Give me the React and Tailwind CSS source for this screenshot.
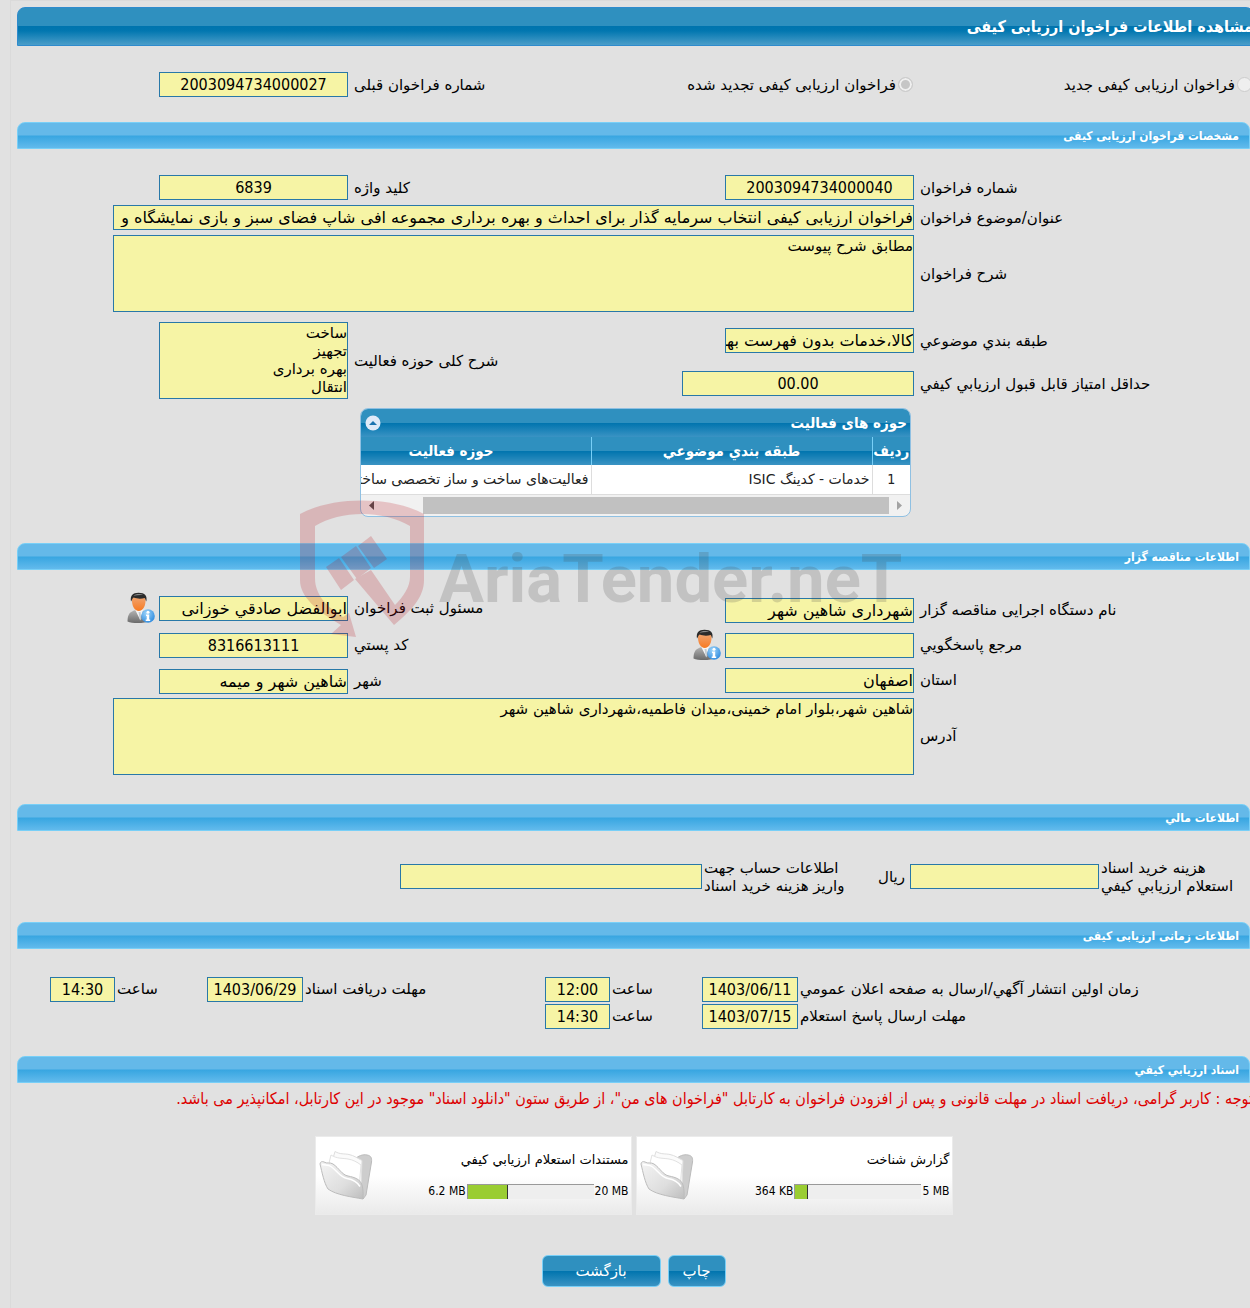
import { useId } from "react";

const inputBase =
  "block border border-[#2878a8] bg-[#f6f4a5] p-0 text-black outline-none";

function TitleBar({ children }) {
  return (
    <h1 className="-mr-1 h-[39px] rounded-t-lg border border-[#2e8bcd] bg-[linear-gradient(#2f90bf_0%,#2f90bf_50%,#0074ae_50%,#0277b0_62%,#4a9dc9_100%)] font-['DejaVu_Sans_Condensed','DejaVu_Sans',sans-serif] text-base leading-[37px] font-bold text-white">
      {children}
    </h1>
  );
}

function SectionBar({ children }) {
  return (
    <h2 className="h-[27px] rounded-t-lg border border-[#78cff7] bg-[linear-gradient(#64b9e9_0%,#64b9e9_48%,#38a6e1_52%,#62baec_100%)] pr-[10px] font-['DejaVu_Sans_Condensed','DejaVu_Sans',sans-serif] text-xs leading-[26px] font-bold text-white">
      {children}
    </h2>
  );
}

function TextInput({ id, value = "", size = "w-[189px]", center }) {
  return (
    <input
      id={id}
      type="text"
      readOnly
      value={value}
      className={`${inputBase} ${size} h-[25px] shrink-0 text-base leading-[18px] ${
        center
          ? "text-center font-['DejaVu_Sans_Condensed','DejaVu_Sans',sans-serif]"
          : "text-right"
      }`}
    />
  );
}

function TextBox({ id, value, size }) {
  return (
    <textarea
      id={id}
      readOnly
      value={value}
      className={`${inputBase} ${size} h-[77px] shrink-0 resize-none overflow-hidden pt-px text-[15px] leading-[18px]`}
    />
  );
}

// label + control, the label text sits against the control
function Field({ label, value, size, center, area, children }) {
  const id = useId();
  return (
    <div className="flex items-center">
      <label htmlFor={id} className="w-[330px] shrink-0 text-left">
        {label}
      </label>
      <div className="mr-[6px] flex items-center gap-1">
        {area ? (
          <TextBox id={id} value={value} size={size} />
        ) : (
          <TextInput id={id} value={value} size={size} center={center} />
        )}
        {children}
      </div>
    </div>
  );
}

function UserInfoIcon() {
  return (
    <svg viewBox="0 0 28 32" className="h-8 w-7">
      <defs>
        <linearGradient id="suit" x1="0" y1="0" x2="0" y2="1">
          <stop offset="0" stopColor="#b4b4b4" />
          <stop offset="1" stopColor="#6a6a6a" />
        </linearGradient>
        <linearGradient id="skin" x1="0" y1="0" x2="0" y2="1">
          <stop offset="0" stopColor="#f0a673" />
          <stop offset="1" stopColor="#f77a22" />
        </linearGradient>
        <radialGradient id="info" cx="0.4" cy="0.3" r="0.8">
          <stop offset="0" stopColor="#9dd4fa" />
          <stop offset="1" stopColor="#2484dc" />
        </radialGradient>
      </defs>
      <path d="M0.5 29.500C0.5 22 3 19.500 9 18h5c6 1.500 8 4 8.500 11-5 2.600-17 2.600-22 .5z" fill="url(#suit)" />
      <path d="M8 17.500l5 10 3.500-10z" fill="#f4f4f4" />
      <path d="M11.500 20h2l.8 7-1.300 1.500z" fill="#c5ccd2" />
      <path d="M5 6.500c0-3 13.500-3 13.500 0 .6 7.500-2.600 12.500-6.700 12.500S4.500 14 5 6.500z" fill="url(#skin)" />
      <path d="M4 9.500C3 4 5.500.8 11.500.8c6.500 0 9 3 7.800 8.700-.8-1.500-.8-2.800-1.600-3.500-3.500 1-8 .8-11-.5-1.500 1-1.600 2.600-2.700 4z" fill="#2b2b2b" />
      <path d="M6.500 3.700c2-2 7-2.200 9.500-.6-3-.2-6.500 0-9.500.6z" fill="#888" />
      <circle cx="21" cy="24" r="6.800" fill="url(#info)" />
      <circle cx="21" cy="20.200" r="1.500" fill="#fff" />
      <path d="M19 22.600h3.200v5h1v1.400h-4.500v-1.400h1v-3.500H19z" fill="#fff" />
    </svg>
  );
}

function FolderIcon() {
  return (
    <svg viewBox="0 0 54 50" className="h-[50px] w-[54px]">
      <defs>
        <linearGradient id="folder" x1="0" y1="0" x2="1" y2="1">
          <stop offset="0" stopColor="#f4f4f4" />
          <stop offset="0.6" stopColor="#dedede" />
          <stop offset="1" stopColor="#bdbdbd" />
        </linearGradient>
      </defs>
      <path d="M36 9c3-3 8-5 12-4 4 .6 5 3 4.500 7L47 45l-3 4-5-10z" fill="#cdcdcd" stroke="#bbbbbb" />
      <path d="M12 15L16 1.500c5 3 9 2 14 3 5 1 9 4 13 6l-1 27z" fill="#fbfbfb" stroke="#dedede" />
      <path d="M9 17l3-12c6 4 12 3 17 4 5 .8 9 3 13 6l-2 23z" fill="#ffffff" stroke="#e2e2e2" />
      <path d="M1 14c0-2 2-3 4-2 3 2 6 0 9 2 6 4 9 11 15 12 7 1.500 12 3 14 9 1 4 1.500 9 1 14-11-2-27-4-35-10C5 33 3 22 1 14z" fill="url(#folder)" stroke="#bcbcbc" />
      <path d="M3 14.500c3 1 6 0 9 2 6 4 9 11 16 12 6 1 10 3 13 8" fill="none" stroke="#ffffff" strokeWidth="1.500" />
    </svg>
  );
}

function Watermark() {
  return (
    <div
      dir="ltr"
      className="pointer-events-none absolute top-[498px] left-[288px] flex opacity-20"
      aria-hidden="true"
    >
      <svg viewBox="0 0 126 139" className="h-[139px] w-[126px] shrink-0">
        <path
          d="M1 15C34-3 92-3 125 15V81C125 98 113 111 95 126L56 80 72 71 96 106C104 98 111 88 111 78V27C84 11 42 11 16 27V79C16 96 28 108 44 118L50 114 57 138 32 135 42 126C18 112 1 98 1 81Z"
          fill="#b80f1b"
        />
        <path d="M27 68L40 59 55 81 42 91ZM42 58L57 47 72 69 58 80ZM59 47L72 37 88 60 75 69Z" fill="#b80f1b" />
      </svg>
      <span className="mt-[38px] ml-[14px] font-['Roboto',sans-serif] text-[67px] leading-[84px] font-bold text-[#4a4a4a]">
        AriaTender.neT
      </span>
    </div>
  );
}

function ActivityTable() {
  const head =
    "border-l border-[#78cff7] bg-[linear-gradient(#2f90bf_0%,#2f90bf_50%,#0074ae_50%,#3a93c3_100%)] p-0 font-bold text-white";
  const cell = "border-l border-[#dddddd] px-[2px] py-0";
  return (
    <div className="mr-[339px] w-[551px] overflow-hidden rounded-lg border border-[#8fc0e2] bg-[#f1f1f1]">
      <div className="flex h-7 items-center justify-between bg-[linear-gradient(#2f90bf_0%,#2f90bf_50%,#0074ae_50%,#3a93c3_100%)] pr-[3px] pl-[4px]">
        <h3 className="font-['DejaVu_Sans_Condensed','DejaVu_Sans',sans-serif] font-bold text-white">
          حوزه های فعالیت
        </h3>
        <button type="button" aria-label="بستن جدول" className="rounded-full">
          <svg viewBox="0 0 16 16" className="size-4">
            <circle cx="8" cy="8" r="7.500" fill="#dfeaf8" />
            <path d="M4 10l4-4 4 4z" fill="#1c74b0" />
          </svg>
        </button>
      </div>
      <table className="w-[599px] table-fixed border-collapse">
        <thead>
          <tr className="h-7 font-['DejaVu_Sans_Condensed','DejaVu_Sans',sans-serif]">
            <th className={`${head} w-[38px]`}>ردیف</th>
            <th className={`${head} w-[281px]`}>طبقه بندي موضوعي</th>
            <th className={`${head} w-[280px]`}>حوزه فعالیت</th>
          </tr>
        </thead>
        <tbody>
          <tr className="h-[29px] border-b border-[#dddddd] bg-white text-sm text-[#222222]">
            <td className={`${cell} text-center font-['DejaVu_Sans_Condensed','DejaVu_Sans',sans-serif]`}>
              1
            </td>
            <td className={cell}>خدمات - کدینگ ISIC</td>
            <td className={`${cell} overflow-hidden whitespace-nowrap`}>
              فعالیت‌های ساخت و ساز تخصصی ساختمان
            </td>
          </tr>
        </tbody>
      </table>
      <div className="flex h-[21px] items-center justify-between px-2">
        <svg viewBox="0 0 5 9" className="h-[9px] w-[5px]">
          <path d="M0 0l5 4.500L0 9z" fill="#a3a3a3" />
        </svg>
        <div className="mr-2 ml-[49px] h-[17px] grow bg-[#c1c1c1]" />
        <svg viewBox="0 0 5 9" className="h-[9px] w-[5px]">
          <path d="M5 0L0 4.500 5 9z" fill="#505050" />
        </svg>
      </div>
    </div>
  );
}

function Deadline({ label, labelSize, date, time }) {
  const id = useId();
  return (
    <div className="flex items-center">
      <label htmlFor={`${id}d`} className={`${labelSize} ml-[2px] shrink-0 text-left`}>
        {label}
      </label>
      <TextInput id={`${id}d`} value={date} size="w-[96px]" center />
      <label htmlFor={`${id}t`} className="ml-[2px] w-[90px] shrink-0 text-left">
        ساعت
      </label>
      <TextInput id={`${id}t`} value={time} size="w-[65px]" center />
    </div>
  );
}

function FileCard({ title, total, used, percent }) {
  return (
    <div className="flex h-[79px] w-[317px] items-center justify-between border border-[#ebebeb] bg-linear-to-b from-white from-50% to-[#eaeaea] pr-[2px] pl-[3px]">
      <div>
        <p className="text-[13px]">{title}</p>
        <div className="mt-[14px] flex items-center gap-px font-['DejaVu_Sans_Condensed','DejaVu_Sans',sans-serif] text-xs">
          <span dir="ltr">{total}</span>
          <div dir="ltr" className="h-[15px] w-[127px] border-t border-l border-[#999999] bg-[#eeeeee]">
            <div
              className="h-full border-r border-[#333333] bg-[#9acd32]"
              style={{ width: `${percent}%` }}
            />
          </div>
          <span dir="ltr">{used}</span>
        </div>
      </div>
      <FolderIcon />
    </div>
  );
}

function ActionButton({ size, children }) {
  return (
    <button
      type="button"
      className={`${size} h-8 rounded-md border border-[#78cff7] bg-[linear-gradient(#2f90bf_0%,#2f90bf_50%,#0074ae_50%,#3a93c3_100%)] text-white`}
    >
      {children}
    </button>
  );
}

function ModeRadio({ label, checked, size }) {
  return (
    <label className={`${size} flex shrink-0 items-center gap-[2px] whitespace-nowrap`}>
      <input
        type="radio"
        name="mode"
        disabled
        defaultChecked={checked}
        className="size-[15px] shrink-0 appearance-none rounded-full border border-[#cccccc] bg-[#efefef] checked:bg-[#c6c6c6] checked:shadow-[inset_0_0_0_2px_#efefef]"
      />
      {label}
    </label>
  );
}

const columns = "grid grid-cols-[minmax(0,566fr)_minmax(0,667fr)]";

function App() {
  return (
    <div
      dir="rtl"
      lang="fa"
      className="min-h-screen overflow-hidden bg-[#e1e1e1] pl-[10px] font-['DejaVu_Sans',sans-serif] text-[15px] leading-[18px] text-black"
    >
      <main className="relative min-h-screen border-t border-l border-[#dadada] pt-[6px] pl-[6px]">
        <TitleBar>مشاهده اطلاعات فراخوان ارزیابی کیفی</TitleBar>

        <section className={`${columns} mt-[26px] items-center`}>
          <div className="-mr-[2px] flex">
            <ModeRadio label="فراخوان ارزیابی کیفی جدید" size="w-[339px]" />
            <ModeRadio label="فراخوان ارزیابی کیفی تجدید شده" size="w-[225px]" checked />
          </div>
          <Field label="شماره فراخوان قبلی" value="2003094734000027" center />
        </section>

        <section className="mt-[25px]">
          <SectionBar>مشخصات فراخوان ارزیابی کیفی</SectionBar>
          <div className="mt-[26px] flex flex-col gap-[5px]">
            <div className={columns}>
              <Field label="شماره فراخوان" value="2003094734000040" center />
              <Field label="کلید واژه" value="6839" center />
            </div>
            <Field
              label="عنوان/موضوع فراخوان"
              value="فراخوان ارزیابی کیفی انتخاب سرمایه گذار برای احداث و بهره برداری مجموعه افی شاپ فضای سبز و بازی نمایشگاه و"
              size="w-[801px]"
            />
            <Field label="شرح فراخوان" value="مطابق شرح پیوست" size="w-[801px]" area />
          </div>
          <div className={`${columns} mt-[10px]`}>
            <div className="mt-[6px] flex flex-col gap-[18px]">
              <Field label="طبقه بندي موضوعي" value="کالا،خدمات بدون فهرست بها،خدمات" />
              <Field label="حداقل امتیاز قابل قبول ارزیابي کیفي" value="00.00" size="w-[232px]" center />
            </div>
            <Field
              label="شرح کلی حوزه فعالیت"
              value={"ساخت\nتجهیز\nبهره برداری\nانتقال"}
              size="w-[189px]"
              area
            />
          </div>
          <div className="mt-[9px]">
            <ActivityTable />
          </div>
        </section>

        <section className="mt-[26px]">
          <SectionBar>اطلاعات مناقصه گزار</SectionBar>
          <div className={`${columns} mt-[25px]`}>
            <div className="mt-[3px] flex flex-col gap-[10px]">
              <Field label="نام دستگاه اجرایی مناقصه گزار" value="شهرداری شاهین شهر" />
              <div className="flex h-[25px] items-center">
                <Field label="مرجع پاسخگويي" value="">
                  <UserInfoIcon />
                </Field>
              </div>
              <Field label="استان" value="اصفهان" />
            </div>
            <div className="flex flex-col gap-[11px]">
              <div className="flex h-[27px] items-center">
                <Field label="مسئول ثبت فراخوان" value="ابوالفضل صادقي خوزانی">
                  <UserInfoIcon />
                </Field>
              </div>
              <Field label="کد پستي" value="8316613111" center />
              <Field label="شهر" value="شاهین شهر و میمه" />
            </div>
          </div>
          <div className="mt-1">
            <Field
              label="آدرس"
              value="شاهین شهر،بلوار امام خمینی،میدان فاطمیه،شهرداری شاهین شهر"
              size="w-[801px]"
              area
            />
          </div>
        </section>

        <section className="mt-[29px]">
          <SectionBar>اطلاعات مالي</SectionBar>
          <div className="mt-[28px] flex items-center">
            <label htmlFor="doc-cost" className="ml-[2px] w-[149px] shrink-0 text-left whitespace-nowrap">
              هزینه خرید اسناد
              <br />
              استعلام ارزيابي کيفي
            </label>
            <TextInput id="doc-cost" />
            <span className="mr-[5px] w-[52px] shrink-0">ریال</span>
            <label htmlFor="account" className="ml-[2px] w-[149px] shrink-0 text-left whitespace-nowrap">
              اطلاعات حساب جهت
              <br />
              واریز هزینه خرید اسناد
            </label>
            <TextInput id="account" size="w-[302px]" />
          </div>
        </section>

        <section className="mt-[27px]">
          <SectionBar>اطلاعات زمانی ارزیابی کیفی</SectionBar>
          <div className="mt-[28px] flex flex-col gap-[2px]">
            <div className="flex">
              <Deadline
                label="زمان اولین انتشار آگهي/ارسال به صفحه اعلان عمومي"
                labelSize="w-[450px]"
                date="1403/06/11"
                time="12:00"
              />
              <Deadline label="مهلت دریافت اسناد" labelSize="w-[240px]" date="1403/06/29" time="14:30" />
            </div>
            <Deadline label="مهلت ارسال پاسخ استعلام" labelSize="w-[450px]" date="1403/07/15" time="14:30" />
          </div>
        </section>

        <section className="mt-[27px]">
          <SectionBar>اسناد ارزیابي کیفي</SectionBar>
          <p className="mt-[7px] -mr-[3px] font-['DejaVu_Sans_Condensed','DejaVu_Sans',sans-serif] text-base leading-[18px] whitespace-nowrap text-[#dd0000]">
            توجه : کاربر گرامی، دریافت اسناد در مهلت قانونی و پس از افزودن فراخوان به کارتابل "فراخوان های من"، از طریق ستون "دانلود اسناد" موجود در این کارتابل، امکانپذیر می باشد.
          </p>
          <div className="mt-[28px] flex justify-center gap-1">
            <FileCard title="گزارش شناخت" total="5 MB" used="364 KB" percent={10} />
            <FileCard title="مستندات استعلام ارزیابي کیفي" total="20 MB" used="6.2 MB" percent={32} />
          </div>
        </section>

        <div className="mt-10 flex justify-center gap-[7px]">
          <ActionButton size="w-[58px]">چاپ</ActionButton>
          <ActionButton size="w-[119px]">بازگشت</ActionButton>
        </div>

        <Watermark />
      </main>
    </div>
  );
}

export default App;
